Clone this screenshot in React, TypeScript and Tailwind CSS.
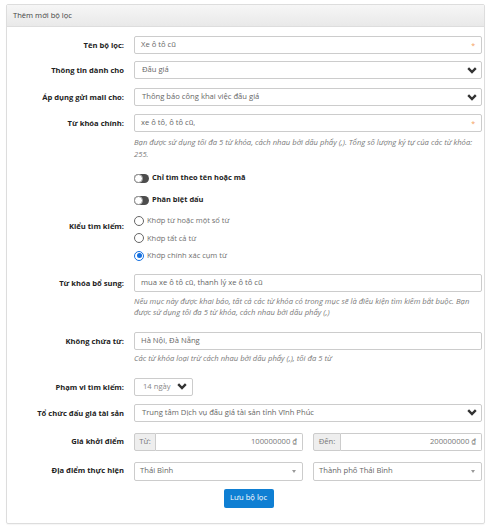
import React from 'react';

const labelCls = "w-[117px] shrink-0 flex justify-end text-right font-bold text-[7.6px] text-[#222] leading-[12px]";
const inputCls = "h-[18px] w-full border border-[#ccc] rounded-[2px] bg-white flex items-center text-[7.65px] text-[#666] leading-none";
const helpCls = "italic text-[7.65px] text-[#7a7a7a] whitespace-nowrap";

function Chevron() {
  return (
    <svg width="10" height="7" viewBox="0 0 10 7" className="shrink-0">
      <polyline points="1.2,1.2 5,5 8.8,1.2" fill="none" stroke="#333" strokeWidth="2.4" />
    </svg>
  );
}

function Caret() {
  return <span className="w-0 h-0 border-l-[2.5px] border-r-[2.5px] border-t-[3px] border-l-transparent border-r-transparent border-t-[#999]" />;
}

function Row({ label, children, className = '', labelClass = 'h-[18px] items-center' }: { label: string; children: React.ReactNode; className?: string; labelClass?: string }) {
  return (
    <div className={`flex ${className}`}>
      <div className={`${labelCls} ${labelClass}`}>{label}</div>
      <div className="ml-[10px] flex-1 min-w-0">{children}</div>
    </div>
  );
}

function Toggle({ text, className = '' }: { text: string; className?: string }) {
  return (
    <div className={`flex h-[12px] items-center ${className}`}>
      <div className="ml-[127px] w-[15px] h-[9px] rounded-full bg-[#4d4d4d] relative">
        <div className="absolute left-0 top-[0px] w-[9px] h-[9px] rounded-full bg-white border border-[#9a9a9a]" />
      </div>
      <span className="ml-[3px] font-bold text-[7.45px] text-[#222]">{text}</span>
    </div>
  );
}

function Radio({ text, checked = false }: { text: string; checked?: boolean }) {
  return (
    <div className="flex h-[17.5px] items-center">
      {checked ? (
        <span className="w-[10px] h-[10px] rounded-full border-[1.5px] border-[#1570e0] flex items-center justify-center">
          <span className="w-[5px] h-[5px] rounded-full bg-[#1570e0]" />
        </span>
      ) : (
        <span className="w-[10px] h-[10px] rounded-full border border-[#666]" />
      )}
      <span className="ml-[3px] text-[7.5px] text-[#707070]">{text}</span>
    </div>
  );
}

export default function App() {
  return (
    <div className="min-h-screen bg-white font-['Open_Sans',sans-serif] pt-[4px] pl-[6px]">
      <div className="w-[479px] border border-[#ddd] rounded-[2px] shadow-[0_1px_1px_rgba(0,0,0,0.04)]">
        <div className="h-[22px] bg-gradient-to-b from-[#f6f6f6] to-[#e9e9e9] border-b border-[#ddd] px-[6px] flex items-center text-[7.6px] text-[#444]">
          Thêm mới bộ lọc
        </div>
        <div className="pt-[9px] pb-[15px] pr-[2px]">
          <Row label="Tên bộ lọc:">
            <div className={`${inputCls} pl-[6px] pr-[6px] justify-between`}>
              <span>Xe ô tô cũ</span>
              <span className="text-[#f5a05a] text-[7px]">*</span>
            </div>
          </Row>
          <Row label="Thông tin dành cho" className="mt-[7px]">
            <div className={`${inputCls} pl-[7px] pr-[4px] justify-between`}>
              <span>Đấu giá</span>
              <Chevron />
            </div>
          </Row>
          <Row label="Áp dụng gửi mail cho:" className="mt-[9px]">
            <div className={`${inputCls} pl-[7px] pr-[4px] justify-between`}>
              <span>Thông báo công khai việc đấu giá</span>
              <Chevron />
            </div>
          </Row>
          <Row label="Từ khóa chính:" className="mt-[8px]">
            <div className={`${inputCls} pl-[6px] pr-[6px] justify-between`}>
              <span>xe ô tô, ô tô cũ,</span>
              <span className="text-[#f5a05a] text-[7px]">*</span>
            </div>
            <p className={`${helpCls} mt-[4px] leading-[12px]`}>
              Bạn được sử dụng tối đa 5 từ khóa, cách nhau bởi dấu phẩy (,). Tổng số lượng ký tự của các từ khóa:
              <br />
              255.
            </p>
          </Row>

          <Toggle text="Chỉ tìm theo tên hoặc mã" className="mt-[12px]" />
          <Toggle text="Phân biệt dấu" className="mt-[10px]" />

          <Row label="Kiểu tìm kiếm:" className="mt-[6px]" labelClass="pt-[7.5px]">
            <Radio text="Khớp từ hoặc một số từ" />
            <Radio text="Khớp tất cả từ" />
            <Radio text="Khớp chính xác cụm từ" checked />
          </Row>

          <Row label="Từ khóa bổ sung:" className="mt-[9.5px]">
            <div className={`${inputCls} pl-[6px]`}>
              <span>mua xe ô tô cũ, thanh lý xe ô tô cũ</span>
            </div>
            <p className={`${helpCls} mt-[3.5px] leading-[11px]`}>
              Nếu mục này được khai báo, tất cả các từ khóa có trong mục sẽ là điều kiện tìm kiếm bắt buộc. Bạn
              <br />
              được sử dụng tối đa 5 từ khóa, cách nhau bởi dấu phẩy (,)
            </p>
          </Row>

          <Row label="Không chứa từ:" className="mt-[14.5px]">
            <div className={`${inputCls} pl-[6px]`}>
              <span>Hà Nội, Đà Nẵng</span>
            </div>
            <p className={`${helpCls} mt-[3px] leading-[11px]`}>
              Các từ khóa loại trừ cách nhau bởi dấu phẩy (,), tối đa 5 từ
            </p>
          </Row>

          <Row label="Phạm vi tìm kiếm:" className="mt-[13.5px]">
            <div className={`${inputCls} !w-[59px] pl-[8px] pr-[5px] justify-between text-[#888]`}>
              <span>14 ngày</span>
              <Chevron />
            </div>
          </Row>

          <Row label="Tổ chức đấu giá tài sản" className="mt-[8px]">
            <div className={`${inputCls} pl-[7px] pr-[4px] justify-between`}>
              <span>Trung tâm Dịch vụ đấu giá tài sản tỉnh Vĩnh Phúc</span>
              <Chevron />
            </div>
          </Row>

          <Row label="Giá khởi điểm" className="mt-[11px]" labelClass="h-[18px] items-center pb-[2px]">
            <div className="grid grid-cols-2 gap-x-[10px]">
              <div className="flex h-[18.5px] text-[7.65px] text-[#777]">
                <div className="w-[22px] shrink-0 bg-[#eee] border border-[#ccc] rounded-l-[2px] flex items-center justify-center">Từ:</div>
                <div className="flex-1 border border-l-0 border-[#ccc] rounded-r-[2px] flex items-center justify-end pr-[5px]">100000000 ₫</div>
              </div>
              <div className="flex h-[18.5px] text-[7.65px] text-[#777]">
                <div className="w-[28px] shrink-0 bg-[#eee] border border-[#ccc] rounded-l-[2px] flex items-center justify-center">Đến:</div>
                <div className="flex-1 border border-l-0 border-[#ccc] rounded-r-[2px] flex items-center justify-end pr-[5px]">200000000 ₫</div>
              </div>
            </div>
          </Row>

          <Row label="Địa điểm thực hiện" className="mt-[11px]" labelClass="h-[18px] items-center pb-[2px]">
            <div className="grid grid-cols-2 gap-x-[10px]">
              <div className={`${inputCls} !h-[18.5px] pl-[5px] pr-[6px] justify-between text-[#555]`}>
                <span>Thái Bình</span>
                <Caret />
              </div>
              <div className={`${inputCls} !h-[18.5px] pl-[5px] pr-[6px] justify-between text-[#555]`}>
                <span>Thành phố Thái Bình</span>
                <Caret />
              </div>
            </div>
          </Row>

          <div className="mt-[8px] flex justify-center pl-[8px]">
            <button className="w-[50px] h-[19px] rounded-[2px] bg-[#0f7fd3] text-white text-[7.65px] flex items-center justify-center">
              Lưu bộ lọc
            </button>
          </div>
        </div>
      </div>
    </div>
  );
}
